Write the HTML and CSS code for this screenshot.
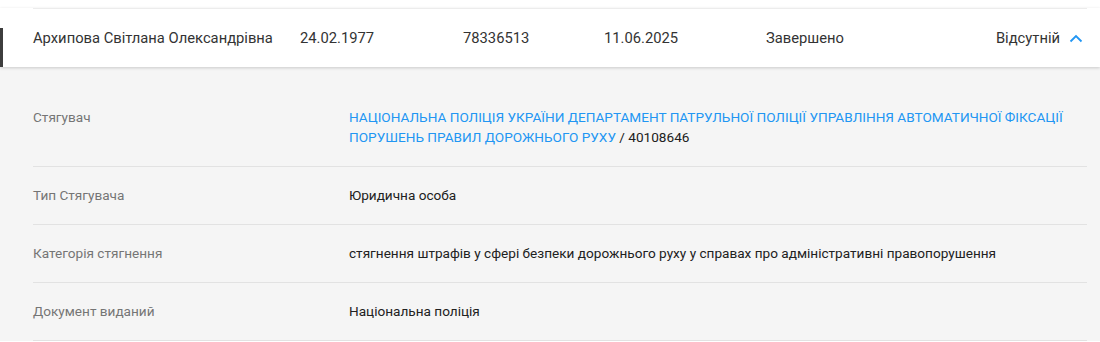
FILE: index.html
```html
<!DOCTYPE html>
<html lang="uk">
<head>
    <meta charset="UTF-8">
    <meta name="viewport" content="width=device-width, initial-scale=1.0">
    <title>Боржники</title>
    <link rel="stylesheet" href="styles.css">
</head>
<body>
    <div class="list">
        <div class="record open">
            <div class="record-head">
                <div class="head-row">
                    <span>Архипова Світлана Олександрівна</span>
                    <span>24.02.1977</span>
                    <span>78336513</span>
                    <span>11.06.2025</span>
                    <span>Завершено</span>
                    <span class="status">Відсутній
                        <svg class="chevron" width="14" height="9" viewBox="0 0 14 9">
                            <path d="M1.5 7.5 L7 2 L12.5 7.5" fill="none" stroke="#2196f3" stroke-width="1.8"/>
                        </svg>
                    </span>
                </div>
            </div>
            <div class="record-body">
                <div class="detail">
                    <div class="label">Стягувач</div>
                    <div class="value"><a href="#">НАЦІОНАЛЬНА ПОЛІЦІЯ УКРАЇНИ ДЕПАРТАМЕНТ ПАТРУЛЬНОЇ ПОЛІЦІЇ УПРАВЛІННЯ АВТОМАТИЧНОЇ ФІКСАЦІЇ ПОРУШЕНЬ ПРАВИЛ ДОРОЖНЬОГО РУХУ</a> / 40108646</div>
                </div>
                <div class="detail">
                    <div class="label">Тип Стягувача</div>
                    <div class="value">Юридична особа</div>
                </div>
                <div class="detail">
                    <div class="label">Категорія стягнення</div>
                    <div class="value">стягнення штрафів у сфері безпеки дорожнього руху у справах про адміністративні правопорушення</div>
                </div>
                <div class="detail">
                    <div class="label">Документ виданий</div>
                    <div class="value">Національна поліція</div>
                </div>
            </div>
        </div>
    </div>
</body>
</html>
```

FILE: styles.css
```css
body {
    margin: 0;
    font-family: Roboto, "Liberation Sans", Arial, sans-serif;
    background-color: #fff;
    color: #333;
}
.list {
    padding-top: 8px;
}
.record-head {
    position: relative;
    z-index: 1;
    background-color: #fff;
    padding: 0 13px 0 33px;
    box-shadow: 0 1px 3px rgba(0, 0, 0, 0.18);
}
.record.open .record-head::before {
    content: "";
    position: absolute;
    left: 0;
    top: 20px;
    bottom: 0;
    width: 3px;
    background-color: #3d3d3d;
}
.head-row {
    display: grid;
    grid-template-columns: 267px 163px 141px 162px 1fr auto;
    align-items: center;
    height: 58px;
    border-top: 1px solid #ececec;
    font-size: 14.75px;
}
.status {
    display: flex;
    align-items: center;
    gap: 9px;
    padding-right: 4px;
}
.record-body {
    background-color: #f5f5f5;
    padding: 22px 13px 0 33px;
}
.detail {
    display: grid;
    grid-template-columns: 316px 1fr;
    padding: 18px 0 19px;
    border-bottom: 1px solid #e2e2e2;
    font-size: 13.6px;
    line-height: 20px;
}
.label {
    color: #757575;
}
.value {
    color: #212121;
}
.value a {
    color: #2196f3;
    text-decoration: none;
}
```
